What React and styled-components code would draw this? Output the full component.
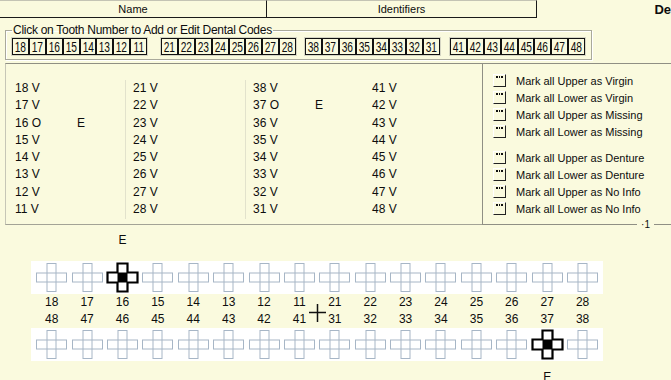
import React from 'react';
import styled, { createGlobalStyle } from 'styled-components';

const GlobalStyle = createGlobalStyle`
    html, body {
        margin: 0;
        padding: 0;
        background: #fafade;
    }
`;

const Page = styled.div`
    width: 671px;
    height: 380px;
    overflow: hidden;
    background: #fafade;
    font-family: 'Liberation Sans', Arial, sans-serif;
    color: #0d0d0d;
`;

const Condensed = styled.span`
    display: inline-block;
    white-space: nowrap;
    transform: scaleX(${({ $scale }) => $scale});
`;

/* header */

const TabBar = styled.div`
    display: flex;
    height: 18px;
`;

const Tab = styled.div`
    width: ${({ $width }) => $width}px;
    box-sizing: border-box;
    border-top: 1px solid #c4c4b4;
    border-right: 1px solid #1a1a1a;
    border-bottom: 1px solid #1a1a1a;
    font-size: 11px;
    line-height: 16px;
    text-align: center;
`;

const Title = styled.div`
    margin-left: auto;
    padding-top: 1px;
    font-size: 13px;
    font-weight: bold;
    line-height: 17px;
`;

/* tooth number buttons */

const CodesGroup = styled.fieldset`
    box-sizing: border-box;
    width: 587px;
    margin: 5px 0 0 5px;
    padding: 0 5px 3px 5px;
    border: 1px solid #a9a99b;
    box-shadow: 1px 1px 0 #fff, inset 1px 1px 0 #fff;
`;

const Legend = styled.legend`
    padding: 0 1px;
    margin-left: 1px;
    font-size: 12px;
    line-height: 14px;
    letter-spacing: -0.28px;
    white-space: nowrap;
`;

const ToothStrip = styled.div`
    display: flex;
`;

const ToothGroup = styled.div`
    display: flex;
    margin-left: ${({ $offset }) => $offset}px;
    border: 1px solid #d6d6c4;
`;

const ToothButton = styled.div`
    width: 16.875px;
    height: 17px;
    box-sizing: border-box;
    border: 1px solid #111;
    display: flex;
    align-items: center;
    justify-content: center;
    font-size: 15px;
    line-height: 15px;
`;

/* list + actions */

const MainPanel = styled.div`
    display: flex;
    height: 162px;
    margin-top: 3px;
`;

const ListBox = styled.div`
    display: flex;
    box-sizing: border-box;
    width: 477px;
    margin-left: 5px;
    padding: 16px 0 0 9px;
    border-top: 1px solid #8f8f84;
    border-left: 1px solid #c6c6b6;
    border-bottom: 1px solid #a3a396;
`;

const Column = styled.div`
    box-sizing: border-box;
    width: ${({ $width }) => $width}px;
    height: 139px;
    padding-left: ${({ $indent }) => $indent}px;
    border-right: 1px solid ${({ $divider }) => ($divider ? '#e2e2cc' : 'transparent')};
`;

const Entry = styled.div`
    display: grid;
    grid-template-columns: 62px auto;
    height: 17.3px;
    font-size: 12px;
    line-height: 17.3px;
`;

const ActionsBox = styled.div`
    position: relative;
    flex: 1;
    padding: 8px 0 0 10px;
    border-top: 1px solid #8f8f84;
    border-left: 1px solid #8f8f84;
    border-bottom: 1px solid #8f8f84;
`;

const ActionGroup = styled.div`
    display: flex;
    flex-direction: column;
    margin-top: ${({ $gap }) => $gap}px;
`;

const ActionRow = styled.div`
    display: flex;
    align-items: center;
    gap: 10px;
    height: 17px;
    font-size: 11px;
`;

const DotsButton = styled.div`
    display: flex;
    justify-content: center;
    gap: 1px;
    width: 13px;
    height: 13px;
    box-sizing: border-box;
    padding-top: 1px;
    border-top: 1px solid #fff;
    border-left: 1px solid #fff;
    border-right: 1px solid #222;
    border-bottom: 1px solid #222;
`;

const Dot = styled.i`
    width: 1.5px;
    height: 1.5px;
    background: #111;
`;

const CornerMark = styled.span`
    position: absolute;
    right: 17px;
    bottom: -7px;
    padding: 0 4px;
    background: #fafade;
    font-size: 10px;
    line-height: 12px;
`;

/* chart */

const Chart = styled.div`
    padding: 8px 0 0 31px;
`;

const Arch = styled.div`
    display: grid;
    grid-template-columns: repeat(16, 35.4px);
    justify-items: center;
    align-items: center;
    box-sizing: border-box;
    width: 572px;
    height: ${({ $height }) => $height}px;
    margin-top: ${({ $gap }) => $gap || 0}px;
    padding: 0 2px 0 3px;
    background: ${({ $white }) => ($white ? '#fff' : 'transparent')};
    font-size: 12px;
    line-height: ${({ $height }) => $height}px;
`;

const Mark = styled.span`
    grid-column: ${({ $col }) => $col};
`;

const Numbers = styled.div`
    position: relative;
`;

const Midline = styled.svg`
    position: absolute;
    left: 278px;
    top: 10px;
`;

const upperCol = [18, 17, 16, 15, 14, 13, 12, 11];
const list = [
    upperCol.map((n) => ({ n, c: n === 16 ? 'O' : 'V', e: n === 16 })),
    [21, 22, 23, 24, 25, 26, 27, 28].map((n) => ({ n, c: 'V' })),
    [38, 37, 36, 35, 34, 33, 32, 31].map((n) => ({ n, c: n === 37 ? 'O' : 'V', e: n === 37 })),
    [41, 42, 43, 44, 45, 46, 47, 48].map((n) => ({ n, c: 'V' })),
];

const columns = [
    { width: 111, indent: 0, divider: true },
    { width: 120, indent: 7, divider: true },
    { width: 126, indent: 7 },
    { width: 110, indent: 0 },
];

const toothGroups = [
    { offset: 0, teeth: [18, 17, 16, 15, 14, 13, 12, 11] },
    { offset: 12, teeth: [21, 22, 23, 24, 25, 26, 27, 28] },
    { offset: 7, teeth: [38, 37, 36, 35, 34, 33, 32, 31] },
    { offset: 8, teeth: [41, 42, 43, 44, 45, 46, 47, 48] },
];

const actions = [
    ['Mark all Upper as Virgin', 'Mark all Lower as Virgin', 'Mark all Upper as Missing', 'Mark all Lower as Missing'],
    ['Mark all Upper as Denture', 'Mark all Lower as Denture', 'Mark all Upper as No Info', 'Mark all Lower as No Info'],
];

const upper = [18, 17, 16, 15, 14, 13, 12, 11, 21, 22, 23, 24, 25, 26, 27, 28];
const lower = [48, 47, 46, 45, 44, 43, 42, 41, 31, 32, 33, 34, 35, 36, 37, 38];

const ToothCross = ({ marked }) =>
    marked ? (
        <svg width="33" height="31" viewBox="0 0 33 31">
            <path
                d="M11.5 1.5h10v9h10v10h-10v9h-10v-9h-10v-10h10z"
                fill="#fff"
                stroke="#000"
                strokeWidth="2.2"
            />
            <rect x="11.5" y="10.5" width="10" height="10" fill="#000" />
        </svg>
    ) : (
        <svg width="33" height="31" viewBox="0 0 33 31">
            <g fill="none" stroke="#a7b6c6" strokeWidth="1">
                <rect x="12" y="1.5" width="9" height="28" />
                <rect x="1.5" y="11" width="30" height="9" />
            </g>
        </svg>
    );

const App = () => (
    <Page>
        <GlobalStyle />
        <TabBar>
            <Tab $width={267}>Name</Tab>
            <Tab $width={270}>Identifiers</Tab>
            <Title>De</Title>
        </TabBar>

        <CodesGroup>
            <Legend>Click on Tooth Number to Add or Edit Dental Codes</Legend>
            <ToothStrip>
                {toothGroups.map((g) => (
                    <ToothGroup key={g.teeth[0]} $offset={g.offset}>
                        {g.teeth.map((t) => (
                            <ToothButton key={t}>
                                <Condensed $scale={0.68}>{t}</Condensed>
                            </ToothButton>
                        ))}
                    </ToothGroup>
                ))}
            </ToothStrip>
        </CodesGroup>

        <MainPanel>
            <ListBox>
                {list.map((col, i) => (
                    <Column
                        key={i}
                        $width={columns[i].width}
                        $indent={columns[i].indent}
                        $divider={columns[i].divider}
                    >
                        {col.map((item) => (
                            <Entry key={item.n}>
                                <span>
                                    {item.n} {item.c}
                                </span>
                                <span>{item.e ? 'E' : ''}</span>
                            </Entry>
                        ))}
                    </Column>
                ))}
            </ListBox>
            <ActionsBox>
                {actions.map((group, gi) => (
                    <ActionGroup key={gi} $gap={gi ? 9 : 0}>
                        {group.map((label) => (
                            <ActionRow key={label}>
                                <DotsButton>
                                    <Dot />
                                    <Dot />
                                    <Dot />
                                </DotsButton>
                                {label}
                            </ActionRow>
                        ))}
                    </ActionGroup>
                ))}
                <CornerMark>·1</CornerMark>
            </ActionsBox>
        </MainPanel>

        <Chart>
            <Arch $height={14}>
                <Mark $col={3}>E</Mark>
            </Arch>
            <Arch $height={33} $gap={14} $white>
                {upper.map((t) => (
                    <ToothCross key={t} marked={t === 16} />
                ))}
            </Arch>
            <Numbers>
                <Arch $height={17}>
                    {upper.map((t) => (
                        <span key={t}>{t}</span>
                    ))}
                </Arch>
                <Arch $height={17}>
                    {lower.map((t) => (
                        <span key={t}>{t}</span>
                    ))}
                </Arch>
                <Midline width="17" height="18" viewBox="0 0 17 18">
                    <path d="M0 8.5h17M8.5 0v18" stroke="#111" strokeWidth="1.5" />
                </Midline>
            </Numbers>
            <Arch $height={33} $white>
                {lower.map((t) => (
                    <ToothCross key={t} marked={t === 37} />
                ))}
            </Arch>
            <Arch $height={14} $gap={9}>
                <Mark $col={15}>E</Mark>
            </Arch>
        </Chart>
    </Page>
);

export default App;
